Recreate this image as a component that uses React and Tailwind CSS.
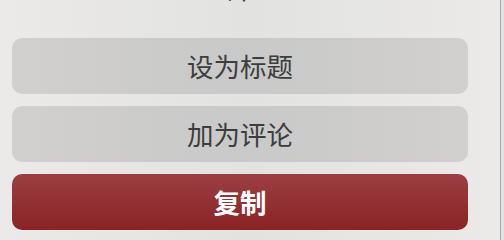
export default function App() {
  const font = { fontFamily: '"Noto Sans CJK SC", "Noto Sans", sans-serif' };
  return (
    <div className="flex h-[240px] w-[504px] overflow-hidden bg-[#dcdcdc]" style={font}>
      <div className="flex w-[500px] flex-col bg-gradient-to-r from-[#ebeae8] via-[#e2e2e1] to-[#ebeae8] pl-3 pr-8">
        <div className="-mt-[27px] text-center text-[26px] leading-[30px] text-[#3c3c3c]">外</div>
        <div className="mt-[35px] flex h-[56px] items-center justify-center rounded-[10px] bg-gradient-to-r from-[#d1d0ce] via-[#c9c9c9] to-[#d1d0ce] text-[26.5px] text-[#3d3d3d]">
          设为标题
        </div>
        <div className="mt-3 flex h-[56px] items-center justify-center rounded-[10px] bg-gradient-to-r from-[#d1d0ce] via-[#c9c9c9] to-[#d1d0ce] text-[26.5px] text-[#3d3d3d]">
          加为评论
        </div>
        <div className="mt-3 flex h-[56px] items-center justify-center rounded-[10px] bg-gradient-to-b from-[#9b3e42] to-[#8a2226] text-[26.5px] font-bold text-white">
          复制
        </div>
      </div>
      <div className="w-px bg-[#a9a9a9]" />
      <div className="flex-1 bg-[#e2e2e2]" />
    </div>
  );
}
